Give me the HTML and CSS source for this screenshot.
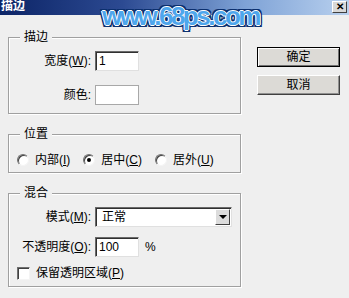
FILE: index.html
```html
<!DOCTYPE html>
<html lang="zh-CN">
<head>
    <meta charset="UTF-8">
    <title>描边</title>
    <link rel="stylesheet" href="styles.css">
</head>
<body>
    <div class="dialog">
        <div class="titlebar">
            <span class="title">描边</span>
            <span class="close-button">✕</span>
        </div>

        <!-- 水印 -->
        <div class="watermark">www.68ps.com</div>

        <div class="content">
            <div class="groups">
                <fieldset class="group group-stroke">
                    <legend>描边</legend>
                    <div class="form-grid">
                        <label>宽度(<u>W</u>):</label>
                        <span class="field field-small">1</span>
                        <label>颜色:</label>
                        <span class="swatch"></span>
                    </div>
                </fieldset>

                <fieldset class="group group-position">
                    <legend>位置</legend>
                    <div class="radio-row">
                        <span class="option"><span class="radio"></span><span>内部(<u>I</u>)</span></span>
                        <span class="option"><span class="radio checked"></span><span>居中(<u>C</u>)</span></span>
                        <span class="option"><span class="radio"></span><span>居外(<u>U</u>)</span></span>
                    </div>
                </fieldset>

                <fieldset class="group group-blend">
                    <legend>混合</legend>
                    <div class="form-grid blend-grid">
                        <label>模式(<u>M</u>):</label>
                        <span class="select">
                            <span class="select-text">正常</span>
                            <span class="select-arrow"></span>
                        </span>
                        <label>不透明度(<u>O</u>):</label>
                        <span class="field-line">
                            <span class="field field-small">100</span>
                            <span class="unit">%</span>
                        </span>
                    </div>
                    <div class="check-row">
                        <span class="checkbox"></span>
                        <span>保留透明区域(<u>P</u>)</span>
                    </div>
                </fieldset>
            </div>

            <div class="buttons">
                <button class="btn btn-default">确定</button>
                <button class="btn">取消</button>
            </div>
        </div>
    </div>
</body>
</html>
```

FILE: styles.css
```css
* {
    margin: 0;
    padding: 0;
    box-sizing: border-box;
}

body {
    font-family: "Liberation Sans", "Noto Sans CJK SC", sans-serif;
    font-size: 12px;
    line-height: 14px;
    color: #000;
    background: #efefef;
    width: 349px;
    height: 298px;
    overflow: hidden;
}

.dialog {
    position: relative;
    height: 298px;
    background: #efefef;
}

/* 标题栏 */
.titlebar {
    height: 15px;
    display: flex;
    align-items: center;
    justify-content: space-between;
    padding: 0 2px 0 1px;
    background: linear-gradient(90deg, #0c2466, #2c4a92 35%, #7ea2d6 70%, #b8d0ee);
}

.title {
    color: #fff;
    font-weight: bold;
    margin-top: -3px;
}

.close-button {
    width: 15px;
    height: 12px;
    margin-top: -1px;
    display: flex;
    align-items: center;
    justify-content: center;
    font-size: 10px;
    font-weight: bold;
    line-height: 10px;
    background: #d8d8d8;
    border: 1px solid;
    border-color: #fff #404040 #404040 #fff;
}

/* 水印 */
.watermark {
    position: absolute;
    left: 102px;
    top: 2px;
    font-family: "Liberation Sans", sans-serif;
    font-size: 26px;
    line-height: 28px;
    font-weight: bold;
    letter-spacing: -2.5px;
    color: #4ea6ec;
    text-shadow:
        1px 0 #fff, -1px 0 #fff, 0 1px #fff, 0 -1px #fff,
        2px 0 #0b2f6e, -2px 0 #0b2f6e, 0 2px #0b2f6e, 0 -2px #0b2f6e,
        2px 2px #0b2f6e, -2px -2px #0b2f6e, 2px -2px #0b2f6e, -2px 2px #0b2f6e;
}

.content {
    display: flex;
    align-items: flex-start;
    padding: 15px 0 0 8px;
}

.groups {
    width: 233px;
    display: flex;
    flex-direction: column;
    gap: 13px;
}

/* 分组框 */
.group {
    margin: 0;
    min-width: 0;
    border: 1px solid #a0a0a0;
    box-shadow: inset 1px 1px #fff, 1px 1px #fff;
    padding: 7px 8px 8px;
}

.group legend {
    margin-left: 3px;
    padding: 0 4px;
    line-height: 14px;
    background: #efefef;
}

.group-position {
    padding: 12px 8px 5px;
}

.group-blend {
    padding: 7px 8px 6px;
}

.form-grid {
    display: grid;
    grid-template-columns: 74px auto;
    column-gap: 4px;
    row-gap: 14px;
    align-items: center;
}

.blend-grid {
    row-gap: 10px;
}

.form-grid label {
    text-align: right;
}

.field {
    height: 20px;
    display: flex;
    align-items: center;
    padding-left: 3px;
    background: #fff;
    border: 1px solid;
    border-color: #6a6a6a #e0e0e0 #e0e0e0 #6a6a6a;
    box-shadow: inset 1px 1px #303030;
}

.field-small {
    width: 44px;
}

.swatch {
    width: 44px;
    height: 20px;
    background: #fff;
    border: 1px solid #a8a8a8;
}

.field-line {
    display: flex;
    align-items: center;
    gap: 6px;
}

.select {
    width: 137px;
    height: 20px;
    display: flex;
    align-items: center;
    justify-content: space-between;
    background: #fff;
    border: 1px solid;
    border-color: #6a6a6a #e0e0e0 #e0e0e0 #6a6a6a;
    box-shadow: inset 1px 1px #303030;
    padding: 1px 1px 1px 6px;
}

.select-arrow {
    width: 15px;
    height: 16px;
    background: #dcdcdc;
    border: 1px solid;
    border-color: #fff #404040 #404040 #fff;
    position: relative;
}

.select-arrow::after {
    content: '';
    position: absolute;
    left: 3px;
    top: 5px;
    border-left: 4px solid transparent;
    border-right: 4px solid transparent;
    border-top: 4px solid #000;
}

/* 单选框 */
.radio-row {
    display: flex;
    gap: 13px;
}

.option {
    display: flex;
    align-items: center;
    gap: 6px;
    white-space: nowrap;
}

.radio {
    width: 12px;
    height: 12px;
    border-radius: 50%;
    background: #fff;
    border: 1px solid;
    border-color: #707070 #f4f4f4 #f4f4f4 #707070;
    box-shadow: inset 1px 1px #404040;
    position: relative;
}

.radio.checked::after {
    content: '';
    position: absolute;
    left: 3px;
    top: 3px;
    width: 4px;
    height: 4px;
    border-radius: 50%;
    background: #000;
}

.check-row {
    margin-top: 9px;
    display: flex;
    align-items: center;
    gap: 6px;
    white-space: nowrap;
}

.checkbox {
    width: 13px;
    height: 13px;
    background: #fff;
    border: 1px solid;
    border-color: #707070 #f4f4f4 #f4f4f4 #707070;
    box-shadow: inset 1px 1px #404040;
}

/* 按钮 */
.buttons {
    margin: 17px 0 0 16px;
    display: flex;
    flex-direction: column;
    gap: 8px;
}

.btn {
    width: 83px;
    height: 20px;
    font: inherit;
    color: #000;
    background: #dcdad6;
    border: 1px solid;
    border-color: #fff #404040 #404040 #fff;
    box-shadow: inset -1px -1px #909090;
}

.btn-default {
    border: 1px solid #000;
    box-shadow: inset 1px 1px #fff, inset -1px -1px #707070;
}
```
